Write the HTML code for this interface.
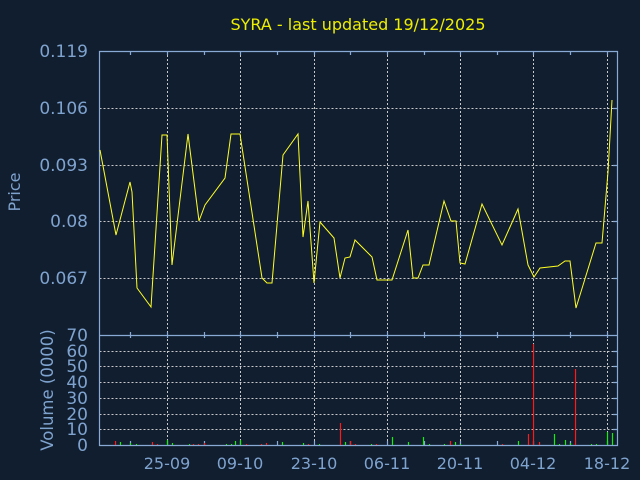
<!DOCTYPE html>
<html><head><meta charset="utf-8"><style>
html,body{margin:0;padding:0;background:#111e2f;}
svg{display:block}
text{font-family:"DejaVu Sans","Liberation Sans",sans-serif;}
</style></head><body>
<svg width="640" height="480" viewBox="0 0 640 480" xmlns="http://www.w3.org/2000/svg">
<rect width="640" height="480" fill="#111e2f"/>
<text x="358" y="30" fill="#eeee00" font-size="16" text-anchor="middle">SYRA - last updated 19/12/2025</text>
<g stroke="#c8c8c8" stroke-width="1" stroke-dasharray="2,2" fill="none">
<path d="M99.5 108.5H617M99.5 165.5H617M99.5 221.5H617M99.5 278.5H617"/>
<path d="M99.5 351.5H617M99.5 366.5H617M99.5 382.5H617M99.5 398.5H617M99.5 414.5H617M99.5 429.5H617"/>
<path d="M167.5 51V445M240.5 51V445M314.5 51V445M387.5 51V445M460.5 51V445M533.5 51V445M607.5 51V445"/>
</g>
<g stroke="#88aad4" stroke-width="1.2" fill="none">
<path d="M99.5 51.5H617.5V445.5H99.5Z"/>
<path d="M99.5 335.5H617.5"/>
<path d="M130.5 51v4M167.5 51v4M204.5 51v4M240.5 51v4M277.5 51v4M314.5 51v4M350.5 51v4M387.5 51v4M424.5 51v4M460.5 51v4M497.5 51v4M533.5 51v4M570.5 51v4M607.5 51v4"/>
<path d="M130.5 332v6M167.5 332v6M204.5 332v6M240.5 332v6M277.5 332v6M314.5 332v6M350.5 332v6M387.5 332v6M424.5 332v6M460.5 332v6M497.5 332v6M533.5 332v6M570.5 332v6M607.5 332v6"/>
<path d="M130.5 445v-4M167.5 445v-4M204.5 445v-4M240.5 445v-4M277.5 445v-4M314.5 445v-4M350.5 445v-4M387.5 445v-4M424.5 445v-4M460.5 445v-4M497.5 445v-4M533.5 445v-4M570.5 445v-4M607.5 445v-4"/>
<path d="M617 108.5h-4M617 165.5h-4M617 221.5h-4M617 278.5h-4M617 351.5h-4M617 366.5h-4M617 382.5h-4M617 398.5h-4M617 414.5h-4M617 429.5h-4"/>
</g>
<g fill="#7fa3cf" font-size="17" text-anchor="end">
<text x="88" y="57">0.119</text>
<text x="88" y="114">0.106</text>
<text x="88" y="171">0.093</text>
<text x="88" y="227">0.08</text>
<text x="88" y="284">0.067</text>
<text x="88" y="341">70</text>
<text x="88" y="357">60</text>
<text x="88" y="372">50</text>
<text x="88" y="388">40</text>
<text x="88" y="404">30</text>
<text x="88" y="420">20</text>
<text x="88" y="435">10</text>
<text x="88" y="451">0</text>
</g>
<g fill="#7fa3cf" font-size="16" text-anchor="middle">
<text x="167" y="469">25-09</text>
<text x="240" y="469">09-10</text>
<text x="314" y="469">23-10</text>
<text x="387" y="469">06-11</text>
<text x="460" y="469">20-11</text>
<text x="533" y="469">04-12</text>
<text x="607" y="469">18-12</text>
</g>
<text transform="translate(20,192) rotate(-90)" fill="#7fa3cf" font-size="16" text-anchor="middle">Price</text>
<text transform="translate(53,390) rotate(-90)" fill="#7fa3cf" font-size="16.5" text-anchor="middle">Volume (0000)</text>
<polyline fill="none" stroke="#ffff22" stroke-width="1" points="100,150 116,235 130,182 132,192 137,288 151,307 162,135 167,135 172,265 188,134 199,221 205,205 225,178 231,134 240,134 262,278 267,283 272,283 283,155 298,134 303,237 308,201 314,283 320,222 334,238 340,278 345,258 350,257 355,240 372,257 377,280 392,280 408,230 413,278 418,278 423,265 429,265 444,201 451,221 456,221 460,263 465,264 482,204 502,245 518,209 528,265 534,277 540,268 558,266 565,261 570,261 576,308 596,243 602,243 608,172 612,100"/>
<g stroke-width="1.2">
<path stroke="#ff1a1a" d="M115.5 445V441M152.5 445V442M157.5 445V444M193.5 445V444M198.5 445V444M204.5 445V443M246.5 445V444M261.5 445V444M266.5 445V443M308.5 445V444M340.5 445V423M350.5 445V441M355.5 445V444M376.5 445V444M450.5 445V441M502.5 445V444M528.5 445V434M533.5 445V344M539.5 445V442M575.5 445V369"/>
<path stroke="#11ee11" d="M120.5 445V442M130.5 445V443M136.5 445V444M167.5 445V440M172.5 445V443M189.5 445V444M226.5 445V444M231.5 445V444M235.5 445V441M240.5 445V440M282.5 445V442M303.5 445V443M319.5 445V444M345.5 445V442M371.5 445V444M392.5 445V437M408.5 445V442M423.5 445V437M429.5 445V444M444.5 445V444M455.5 445V442M460.5 445V444M518.5 445V441M554.5 445V434M559.5 445V444M565.5 445V440M570.5 445V443M591.5 445V444M596.5 445V444M607.5 445V432M612.5 445V433"/>
</g>
</svg>
</body></html>
